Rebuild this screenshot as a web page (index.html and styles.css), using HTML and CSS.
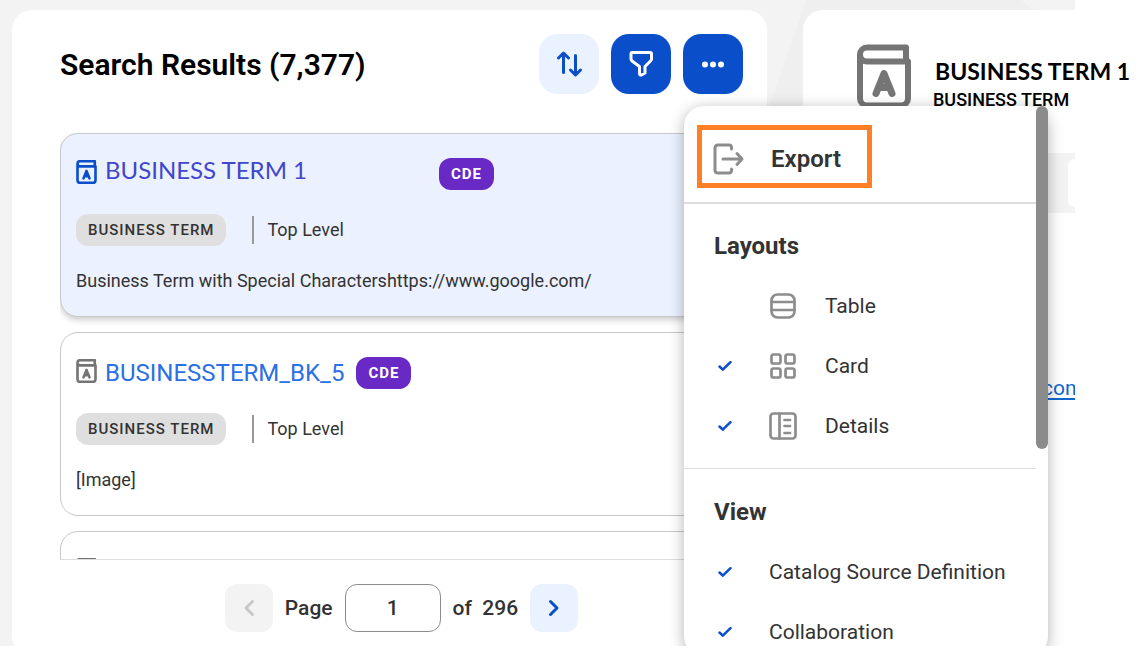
FILE: index.html
```html
<!DOCTYPE html>
<html lang="en">

<head>
    <meta charset="utf-8">
    <meta name="viewport" content="width=device-width, initial-scale=1.0">
    <title>Search Results</title>
    <link rel="stylesheet" href="styles.css">
</head>

<body>
    <!-- shared icons -->
    <svg class="sprite" aria-hidden="true">
        <symbol id="book" viewBox="0 0 54 64">
            <path d="M49 17V3H10a7 7 0 0 0-7 7v44a7 7 0 0 0 7 7h34a7 7 0 0 0 7-7V17H10a7 7 0 0 1-7-7" />
            <path d="M19 49l8-20 8 20M22 43h10" stroke-width="7" />
        </symbol>
        <symbol id="check" viewBox="0 0 14 10">
            <path d="M1.500 5.500l3.300 3.200L12.500 1.200" />
        </symbol>
    </svg>

    <div class="app">
        <main class="panel results">
            <header class="results-head">
                <h1>Search Results (7,377)</h1>
                <div class="actions">
                    <button class="action light" aria-label="Sort">
                        <svg width="26" height="26" viewBox="0 0 26 26">
                            <path d="M7.500 21.500V2.500M2.500 7l5-5 5 5M19.500 4.500v19M14.500 19l5 5 5-5" />
                        </svg>
                    </button>
                    <button class="action" aria-label="Filter">
                        <svg width="26" height="26" viewBox="0 0 26 26">
                            <path d="M4 1.500h18q1.500 0 1.500 1.500v5q0 1-1 2l-5.500 5.500v6.500l-3.500 2q-2 .5-2-1.500v-7L4 10q-1-1-1-2V3q0-1.500 1-1.500z" />
                        </svg>
                    </button>
                    <div class="more">
                        <button class="action" aria-label="More options">
                            <svg class="dots" width="26" height="26" viewBox="0 0 26 26">
                                <circle cx="5" cy="13.500" r="3" />
                                <circle cx="13" cy="13.500" r="3" />
                                <circle cx="21" cy="13.500" r="3" />
                            </svg>
                        </button>

                        <div class="menu">
                            <div class="menu-body">
                                <div class="menu-top">
                                    <button class="export">
                                        <svg width="32" height="32" viewBox="0 0 32 32">
                                            <path d="M18.500 6V4.500q0-2.500-2.500-2.500H5Q2 2 2 5v22q0 3 3 3h11q2.500 0 2.500-2.500V26M10 16h19M24 10.500L29 16l-5 5.500" />
                                        </svg>
                                        Export
                                    </button>
                                </div>
                                <section class="group">
                                    <h2>Layouts</h2>
                                    <button class="option">
                                        <span class="tick"></span>
                                        <svg class="kind" viewBox="0 0 28 28">
                                            <rect x="2.500" y="2.500" width="23" height="23" rx="6" />
                                            <path d="M2.500 10h23M2.500 18h23" />
                                        </svg>
                                        Table
                                    </button>
                                    <button class="option">
                                        <span class="tick"><svg><use href="#check" /></svg></span>
                                        <svg class="kind" viewBox="0 0 28 28">
                                            <rect x="2.500" y="2.500" width="9" height="9" rx="2" />
                                            <rect x="16.500" y="2.500" width="9" height="9" rx="2" />
                                            <rect x="2.500" y="16.500" width="9" height="9" rx="2" />
                                            <rect x="16.500" y="16.500" width="9" height="9" rx="2" />
                                        </svg>
                                        Card
                                    </button>
                                    <button class="option">
                                        <span class="tick"><svg><use href="#check" /></svg></span>
                                        <svg class="kind" viewBox="0 0 28 28">
                                            <rect x="1.500" y="1.500" width="25" height="25" rx="3" />
                                            <path d="M10.500 1.500v25M15.500 8H21M15.500 14H21M15.500 21H21" />
                                        </svg>
                                        Details
                                    </button>
                                </section>
                                <section class="group">
                                    <h2>View</h2>
                                    <button class="option">
                                        <span class="tick"><svg><use href="#check" /></svg></span>
                                        Catalog Source Definition
                                    </button>
                                    <button class="option">
                                        <span class="tick"><svg><use href="#check" /></svg></span>
                                        Collaboration
                                    </button>
                                </section>
                            </div>
                            <div class="thumb"></div>
                        </div>
                    </div>
                </div>
            </header>

            <div class="list">
                <article class="card selected">
                    <div class="card-title">
                        <svg class="book"><use href="#book" /></svg>
                        <a class="alt" href="#">BUSINESS TERM 1</a>
                        <span class="cde">CDE</span>
                    </div>
                    <div class="card-meta">
                        <span class="type">BUSINESS TERM</span>
                        <span class="level">Top Level</span>
                    </div>
                    <p>Business Term with Special Charactershttps://www.google.com/</p>
                </article>
                <article class="card">
                    <div class="card-title">
                        <svg class="book"><use href="#book" /></svg>
                        <a href="#">BUSINESSTERM_BK_5</a>
                        <span class="cde">CDE</span>
                    </div>
                    <div class="card-meta">
                        <span class="type">BUSINESS TERM</span>
                        <span class="level">Top Level</span>
                    </div>
                    <p>[Image]</p>
                </article>
                <article class="card">
                    <div class="card-title">
                        <svg class="book"><use href="#book" /></svg>
                    </div>
                </article>
            </div>

            <nav class="pager">
                <button class="step" disabled aria-label="Previous page">
                    <svg width="12" height="18" viewBox="0 0 12 18"><path d="M9.500 2.500L3 9l6.500 6.500" /></svg>
                </button>
                <label for="page">Page</label>
                <input id="page" type="text" value="1">
                <span class="total">of&nbsp; 296</span>
                <button class="step" aria-label="Next page">
                    <svg width="12" height="18" viewBox="0 0 12 18"><path d="M2.500 2.500L9 9l-6.500 6.500" /></svg>
                </button>
            </nav>
        </main>

        <aside class="panel details">
            <header class="details-head">
                <svg class="book"><use href="#book" /></svg>
                <div>
                    <h2>BUSINESS TERM 1</h2>
                    <p>BUSINESS TERM</p>
                </div>
            </header>
            <div class="tabs">
                <div class="tab"></div>
            </div>
            <div class="details-body">
                <a href="#">https://www.google.com/</a>
            </div>
        </aside>
    </div>
</body>

</html>
```
FILE: styles.css
```css
* {
    box-sizing: border-box;
}

body {
    margin: 0;
    height: 100vh;
    padding: 0 65px 15px 0;
    font-family: Roboto, sans-serif;
    color: #333;
    background: white;
    overflow: hidden;
}

h1,
h2,
p {
    margin: 0;
}

button {
    font-family: inherit;
    border: 0;
    padding: 0;
    cursor: pointer;
}

svg {
    display: block;
    flex: none;
    fill: none;
    stroke: currentColor;
    stroke-width: 3;
    stroke-linecap: round;
    stroke-linejoin: round;
}

.sprite {
    display: none;
}

.app {
    position: relative;
    isolation: isolate;
    display: grid;
    grid-template-columns: 755fr 272fr;
    grid-template-rows: calc(100% + 20px);
    gap: 36px;
    height: 100%;
    padding: 10px 0 10px 12px;
    background: #f3f3f3;
    overflow-x: visible;
    overflow-y: clip;
}

/* faint shape in the page background */
.app::before {
    content: "";
    position: absolute;
    z-index: -1;
    inset: 0;
    background: #efefef;
    clip-path: polygon(75% 0, 95% 0, 100% 7%, 100% 100%, 54% 100%);
}

.panel {
    min-width: 0;
    background: white;
    border-radius: 20px;
}

/* results */
.results {
    display: flex;
    flex-direction: column;
    padding: 24px 24px 24px 48px;
}

.results-head {
    display: flex;
    justify-content: space-between;
    align-items: center;
    margin-bottom: 39px;
}

h1 {
    font-size: 30px;
    font-weight: 600;
    color: black;
}

.actions {
    display: flex;
    gap: 12px;
}

.action {
    display: flex;
    justify-content: center;
    align-items: center;
    width: 60px;
    height: 60px;
    border-radius: 18px;
    color: white;
    background: #0a4fc9;
}

.action.light {
    color: #0a4fc9;
    background: #ebf2ff;
}

.dots {
    fill: currentColor;
    stroke: none;
}

.list {
    flex: 1;
    min-height: 0;
    display: flex;
    flex-direction: column;
    gap: 15px;
    border-bottom: 1px solid #ddd;
    overflow: hidden;
}

.card {
    flex: none;
    display: flex;
    flex-direction: column;
    gap: 24px;
    padding: 24px 15px;
    border: 1px solid #c8c8c8;
    border-radius: 18px;
}

.card.selected {
    background: #ebf1fe;
    box-shadow: 0 3px 6px rgba(0, 0, 0, 0.2);
}

.card-title {
    display: flex;
    align-items: center;
    height: 32px;
}

.card .book {
    width: 21px;
    height: 24px;
    margin: 0 8px 5px 0;
    stroke-width: 7;
    color: #757575;
}

.card.selected .book {
    color: #0a4fc9;
}

.card a {
    margin-right: 12px;
    font-size: 24px;
    line-height: 32px;
    color: #2b70e4;
    text-decoration: none;
}

.card a.alt {
    min-width: 322px;
    padding-bottom: 8px;
    font-family: Lato, sans-serif;
    color: #4146cc;
}

.cde {
    padding: 0 12px;
    border-radius: 12px;
    font-size: 15px;
    font-weight: 700;
    line-height: 32px;
    letter-spacing: 1px;
    color: white;
    background: #6929c4;
}

.card-meta {
    display: flex;
    align-items: center;
    gap: 26px;
}

.type {
    padding: 0 12px;
    border-radius: 12px;
    font-size: 15px;
    font-weight: 500;
    line-height: 32px;
    letter-spacing: 1px;
    background: #dfdfdf;
}

.level {
    padding-left: 13px;
    border-left: 2px solid #999;
    font-size: 18px;
    line-height: 28px;
}

.card p {
    font-size: 18px;
    line-height: 22px;
}

.pager {
    display: flex;
    justify-content: center;
    align-items: center;
    gap: 12px;
    padding-top: 24px;
    font-size: 21px;
    font-weight: 500;
}

.step {
    display: flex;
    justify-content: center;
    align-items: center;
    width: 48px;
    height: 48px;
    border-radius: 12px;
    color: #0a4fc9;
    background: #ebf2ff;
}

.step:disabled {
    color: #c8c8c8;
    background: #f3f3f3;
}

.pager input {
    width: 96px;
    height: 48px;
    border: 1px solid #8d8d8d;
    border-radius: 12px;
    font: inherit;
    color: inherit;
    text-align: center;
    background: white;
}

/* options menu */
.more {
    position: relative;
}

.menu {
    position: absolute;
    z-index: 1;
    top: 72px;
    left: 1px;
    width: 364px;
    height: calc(100vh - 111px);
    border-radius: 20px;
    background: white;
    box-shadow: 0 3px 15px rgba(0, 0, 0, 0.3);
}

.menu-body {
    margin-right: 12px;
}

.menu-top {
    padding: 19px 13px 14px;
    border-bottom: 2px solid #ddd;
}

.export {
    display: flex;
    align-items: center;
    gap: 26px;
    height: 63px;
    padding: 5px 26px 0 11px;
    border: 5px solid #ff7f27;
    font-size: 24px;
    font-weight: 600;
    color: #333;
    background: white;
}

.export svg,
.kind {
    color: #8d8d8d;
}

.group {
    padding: 24px 0 12px 30px;
    border-bottom: 1px solid #ddd;
}

.group + .group {
    padding-top: 25px;
    border: 0;
}

.group h2 {
    padding-bottom: 12px;
    font-size: 24px;
    font-weight: 700;
    line-height: 36px;
}

.option {
    display: flex;
    align-items: center;
    width: 100%;
    height: 60px;
    font-size: 21px;
    color: #333;
    background: none;
}

.tick {
    width: 52px;
    padding-left: 4px;
    margin-right: 3px;
    color: #0a4fc9;
}

.tick svg {
    width: 14px;
    height: 10px;
    stroke-width: 2.5;
}

.kind {
    width: 28px;
    height: 28px;
    margin-right: 28px;
    stroke-width: 2.7;
}

.thumb {
    position: absolute;
    top: 0;
    right: 0;
    width: 12px;
    height: 343px;
    border-radius: 6px;
    background: #8b8b8b;
}

/* details */
.details {
    border-radius: 20px 0 0 20px;
    padding-top: 34px;
}

.details-head {
    display: flex;
    gap: 22px;
    height: 109px;
    padding-left: 54px;
    white-space: nowrap;
    color: black;
}

.details-head .book {
    width: 54px;
    height: 65px;
    stroke-width: 6;
    color: #757575;
}

.details-head h2 {
    padding: 12px 0 0 2px;
    font-family: Lato, sans-serif;
    font-size: 23px;
    font-weight: 700;
    line-height: 30px;
}

.details-head p {
    font-size: 18px;
    font-weight: 500;
    line-height: 28px;
}

.tabs {
    display: flex;
    justify-content: flex-end;
    height: 60px;
    padding: 6px 0;
    background: #f3f3f3;
}

.tab {
    width: 7px;
    border-radius: 12px 0 0 12px;
    background: white;
}

.details-body {
    padding: 160px 0 0 50px;
    overflow: hidden;
}

.details-body a {
    font-size: 21px;
    line-height: 30px;
    text-underline-offset: 3px;
    text-decoration-thickness: 2px;
    color: #0f66d0;
}
```
